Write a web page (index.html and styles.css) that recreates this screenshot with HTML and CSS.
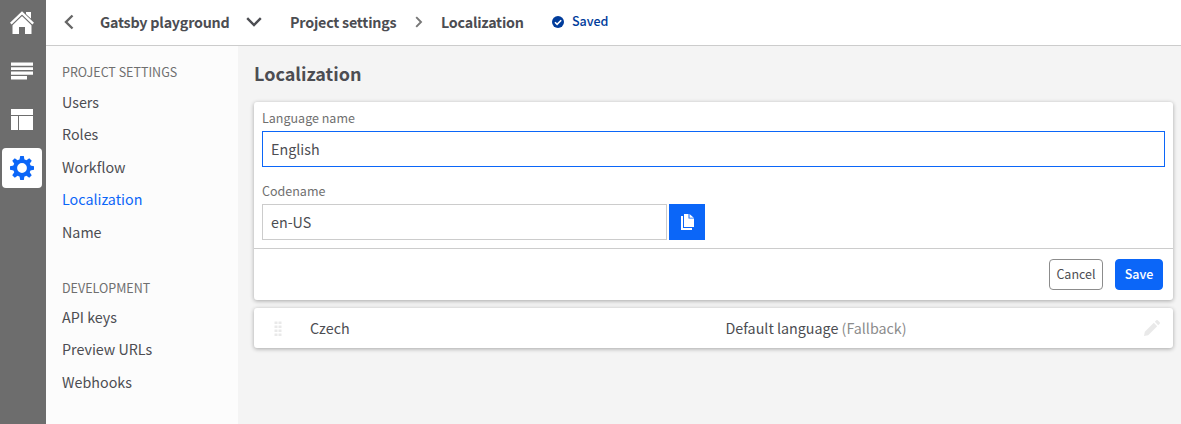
FILE: index.html
```html
<!DOCTYPE html>
<html lang="en">
<head>
<meta charset="utf-8">
<title>Localization</title>
<link rel="stylesheet" href="styles.css">
</head>
<body>
<div class="app">
  <nav class="rail">
    <a class="rail-item"><svg width="24" height="24" viewBox="0 0 24 24"><path fill="#fff" d="M16 1h5v8l-5-4.700z"/><path fill="#fff" d="M12 4.500 21.500 14v9H15v-7H9v7H2.500v-9z"/><path fill="none" stroke="#6d6d6d" stroke-width="4.600" d="M0 13.400 12 1.900l12 11.500"/><path fill="#fff" d="M16.500 1H21v6.500l-4.500-4z"/><path fill="none" stroke="#fff" stroke-width="2.400" d="M.8 12.600 12 1.900l11.200 10.700"/></svg></a>
    <a class="rail-item"><svg width="22" height="18" viewBox="0 0 22 18"><path fill="#fff" d="M0 .5h22v3.300H0zM0 5.200h22V8H0zM0 9.400h22v3.300H0zM0 14h16v3.500H0z"/></svg></a>
    <a class="rail-item"><svg width="22" height="22" viewBox="0 0 22 22"><path fill="#fff" d="M0 1h22v6H0zM0 8h7v14H0zM8 8h14v14H8z"/></svg></a>
    <a class="rail-item rail-active"><svg width="24" height="24" viewBox="-12 -12 24 24"><g fill="#0b66f8"><path id="t" d="M-2.700-7-1.800-12H1.800L2.700-7z"/><use href="#t" transform="rotate(45)"/><use href="#t" transform="rotate(90)"/><use href="#t" transform="rotate(135)"/><use href="#t" transform="rotate(180)"/><use href="#t" transform="rotate(225)"/><use href="#t" transform="rotate(270)"/><use href="#t" transform="rotate(315)"/></g><circle r="6.900" fill="none" stroke="#0b66f8" stroke-width="4"/></svg></a>
  </nav>
  <div class="main">
    <header class="topbar">
      <svg class="back" width="10" height="16" viewBox="0 0 10 16"><path d="M8.500 1.500 2 8l6.500 6.500" fill="none" stroke="#666" stroke-width="2.400"/></svg>
      <span class="crumb project">Gatsby playground</span>
      <svg class="down" width="16" height="10" viewBox="0 0 16 10"><path d="M1.200 1.200 8 8l6.800-6.800" fill="none" stroke="#4c4d52" stroke-width="2.400"/></svg>
      <span class="crumb settings">Project settings</span>
      <svg class="next" width="8" height="12" viewBox="0 0 8 12"><path d="M1.200 1.200 6 6l-4.800 4.800" fill="none" stroke="#777" stroke-width="1.900"/></svg>
      <span class="crumb page">Localization</span>
      <svg class="check" width="12" height="12" viewBox="0 0 12 12"><circle cx="6" cy="6" r="6" fill="#003c9b"/><path d="m3 6.200 2.100 2.100L9.200 4.200" fill="none" stroke="#fff" stroke-width="1.600"/></svg>
      <span class="saved">Saved</span>
    </header>
    <div class="body">
      <aside class="side">
        <h2 class="group">PROJECT SETTINGS</h2>
        <a class="link">Users</a>
        <a class="link">Roles</a>
        <a class="link">Workflow</a>
        <a class="link current">Localization</a>
        <a class="link">Name</a>
        <h2 class="group second">DEVELOPMENT</h2>
        <a class="link">API keys</a>
        <a class="link">Preview URLs</a>
        <a class="link">Webhooks</a>
      </aside>
      <main class="content">
        <h1 class="title">Localization</h1>
        <section class="card editor">
          <div class="fields">
            <div class="label">Language name</div>
            <div class="input focused">English</div>
            <div class="label codename">Codename</div>
            <div class="code-row">
              <div class="input code">en-US</div>
              <div class="copy"><svg width="14" height="16" viewBox="0 0 14 16"><path fill="#fff" d="M1 2h2v12h9v2H1z"/><path fill="#fff" d="M4 0h4.500v4.500H14V13H4z"/><path fill="#fff" d="M9.500 0l4.300 3.700H9.500z"/></svg></div>
            </div>
          </div>
          <div class="actions"><span class="btn cancel">Cancel</span><span class="btn save">Save</span></div>
        </section>
        <section class="card row">
          <svg class="grip" width="8" height="15" viewBox="0 0 8 15"><path d="M2 .5v15M6 .5v15" stroke="#e9e9e9" stroke-width="3" stroke-dasharray="2.400 1.600"/></svg>
          <span class="lang">Czech</span>
          <span class="default">Default language <span class="muted">(Fallback)</span></span>
          <svg class="pencil" width="16" height="16" viewBox="0 0 16 16"><path fill="#e9e9e9" d="M0 16l.8-4.200L9.800 2.800 13.200 6.200l-9 9zM10.800 1.800 12.300.3q.7-.6 1.400 0l2 2q.6.700 0 1.400L14.200 5.200z"/></svg>
        </section>
      </main>
    </div>
  </div>
</div>
</body>
</html>
```

FILE: styles.css
```css
* { box-sizing: border-box; }
body { margin: 0; font-family: "Noto Sans CJK SC", "Noto Sans", sans-serif; font-size: 14.3px; color: #4c4d52; background: #f4f4f4; }
svg { display: block; flex: none; }
.app { display: flex; height: 424px; overflow: hidden; }
.rail { width: 46px; flex: none; background: #6d6d6d; padding: 3px 2px; display: flex; flex-direction: column; gap: 8px; }
.rail-item { width: 40px; height: 40px; flex: none; border-radius: 4px; display: flex; align-items: center; justify-content: center; }
.rail-active { background: #fff; margin-top: 1px; }
.main { flex: 1; display: flex; flex-direction: column; }
.topbar { height: 46px; flex: none; background: #fff; border-bottom: 1px solid #ccc; display: flex; align-items: center; padding: 0 0 2px 18px; white-space: nowrap; }
.crumb { font-weight: 700; line-height: 24px; letter-spacing: -.22px; }
.project { width: 130px; margin-left: 26px; }
.down { margin-left: 16px; }
.settings { width: 108px; margin-left: 28px; }
.next { margin-left: 17px; }
.page { width: 84px; margin-left: 18px; }
.check { margin-left: 27px; }
.saved { margin-left: 8px; font-size: 12.500px; font-weight: 500; color: #003c9b; line-height: 20px; padding-bottom: 2px; }
.body { display: flex; flex: 1; }
.side { width: 192px; flex: none; background: #fcfcfc; padding: 16px 16px 0; }
.group { margin: 0 0 7.800px; font-size: 12.500px; font-weight: 400; line-height: 20px; color: #6f6f6f; }
.second { margin-top: 25.700px; margin-bottom: 7px; }
.link { display: block; line-height: 24px; height: 32.500px; }
.current { color: #0b66f8; }
.content { flex: 1; padding: 15px 8px 0 16px; }
.title { margin: 0; font-size: 18px; font-weight: 700; line-height: 24px; }
.card { background: #fff; border-radius: 3px; box-shadow: 0 1px 4px rgba(0,0,0,.32); }
.editor { margin-top: 17px; height: 198px; }
.fields { height: 147px; padding: 6px 8px 0; border-bottom: 1px solid #ccc; }
.label { font-size: 12.500px; line-height: 20px; color: #6f6f6f; }
.input { height: 36px; border: 1px solid #ccc; padding: 0 8px; line-height: 34px; margin-top: 3px; }
.focused { border-color: #0b66f8; }
.codename { margin-top: 14px; }
.code-row { display: flex; gap: 2px; margin-top: 3px; }
.code { width: 405px; margin: 0; }
.copy { width: 36px; height: 36px; background: #0b66f8; display: flex; align-items: center; justify-content: center; }
.actions { display: flex; justify-content: flex-end; gap: 12px; padding: 10px 10px 0 0; }
.btn { height: 31px; line-height: 28px; border: 1px solid #8c8c8c; border-radius: 4px; text-align: center; font-size: 12.500px; }
.cancel { width: 54px; }
.save { width: 48px; background: #0b66f8; border-color: #0b66f8; color: #fff; font-weight: 500; }
.row { height: 40px; margin-top: 8px; display: flex; align-items: center; padding: 0 13px 0 20px; line-height: 24px; }
.lang { margin-left: 28px; width: 415.500px; }
.default { flex: 1; }
.muted { color: #8c8c8c; }
```
